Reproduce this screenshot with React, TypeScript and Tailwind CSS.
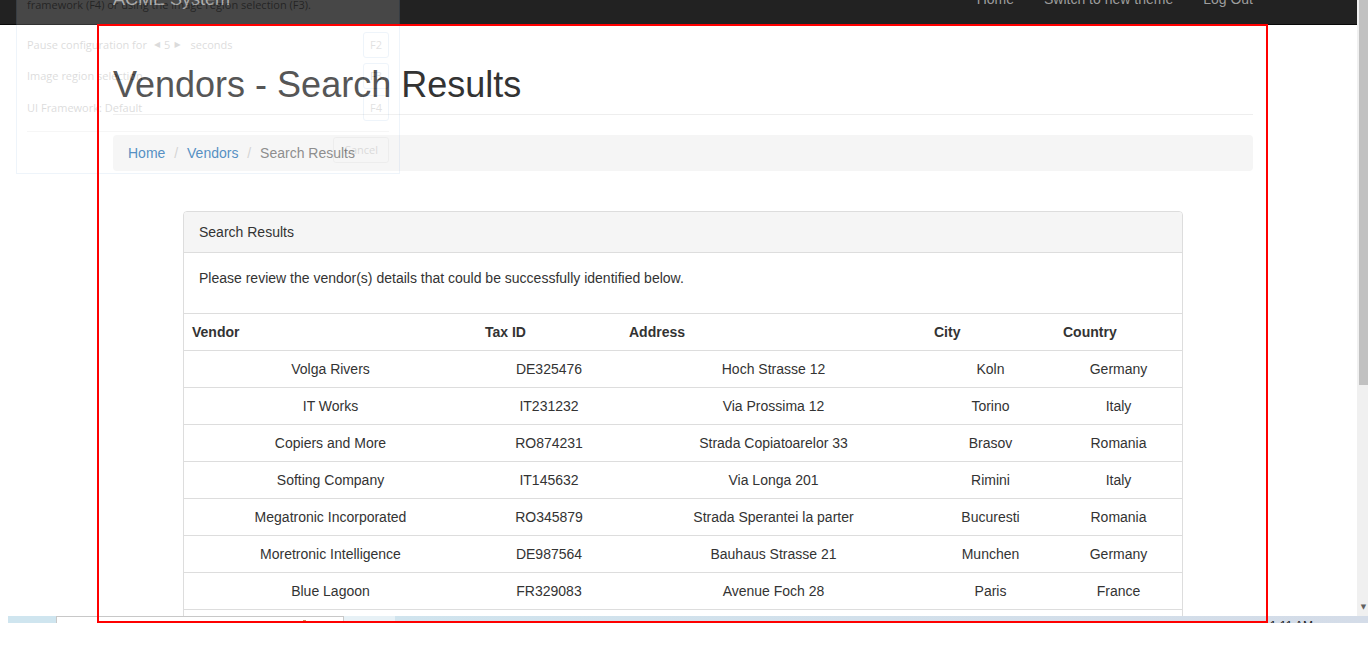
import React from 'react';

const vendors = [
  { name: 'Volga Rivers', taxId: 'DE325476', address: 'Hoch Strasse 12', city: 'Koln', country: 'Germany' },
  { name: 'IT Works', taxId: 'IT231232', address: 'Via Prossima 12', city: 'Torino', country: 'Italy' },
  { name: 'Copiers and More', taxId: 'RO874231', address: 'Strada Copiatoarelor 33', city: 'Brasov', country: 'Romania' },
  { name: 'Softing Company', taxId: 'IT145632', address: 'Via Longa 201', city: 'Rimini', country: 'Italy' },
  { name: 'Megatronic Incorporated', taxId: 'RO345879', address: 'Strada Sperantei la parter', city: 'Bucuresti', country: 'Romania' },
  { name: 'Moretronic Intelligence', taxId: 'DE987564', address: 'Bauhaus Strasse 21', city: 'Munchen', country: 'Germany' },
  { name: 'Blue Lagoon', taxId: 'FR329083', address: 'Avenue Foch 28', city: 'Paris', country: 'France' },
  { name: 'Nordic Supplies', taxId: 'SE112233', address: 'Storgatan 4', city: 'Malmo', country: 'Sweden' },
];

function Navbar() {
  return (
    <nav className="-mt-[26px] h-[51px] bg-[#222] border-b border-[#080808]">
      <div className="ml-[98px] w-[1170px] px-[15px] flex justify-between">
        <span className="py-[15px] text-[18px] leading-[20px] text-[#9d9d9d]">ACME System</span>
        <ul className="flex -mr-[15px]">
          {['Home', 'Switch to new theme', 'Log Out'].map((link) => (
            <li key={link}>
              <a className="block px-[15px] py-[15px] leading-[20px] text-[#9d9d9d]">{link}</a>
            </li>
          ))}
        </ul>
      </div>
    </nav>
  );
}

function Breadcrumb() {
  return (
    <ol className="h-[36px] px-[15px] py-[8px] leading-[20px] bg-[#f5f5f5] rounded-[4px]">
      <li className="inline-block">
        <a className="text-[#337ab7]">Home</a>
      </li>{' '}
      <li className="inline-block">
        <span className="px-[5px] text-[#ccc]">/&nbsp;</span>
        <a className="text-[#337ab7]">Vendors</a>
      </li>{' '}
      <li className="inline-block text-[#777]">
        <span className="px-[5px] text-[#ccc]">/&nbsp;</span>
        Search Results
      </li>
    </ol>
  );
}

function ResultsPanel() {
  return (
    <div className="ml-[70px] mt-[40px] w-[1000px] border border-[#ddd] rounded-[4px] bg-white">
      <div className="px-[15px] py-[10px] leading-[20px] bg-[#f5f5f5] border-b border-[#ddd] rounded-t-[3px]">
        Search Results
      </div>
      <div className="p-[15px]">
        <p className="leading-[20px] mb-[10px]">
          Please review the vendor(s) details that could be successfully identified below.
        </p>
      </div>
      <table className="w-full table-fixed border-collapse">
        <colgroup>
          <col className="w-[293px]" />
          <col className="w-[144px]" />
          <col className="w-[305px]" />
          <col className="w-[129px]" />
          <col className="w-[127px]" />
        </colgroup>
        <thead>
          <tr>
            {['Vendor', 'Tax ID', 'Address', 'City', 'Country'].map((h) => (
              <th key={h} className="border-t border-[#ddd] p-[8px] text-left font-bold leading-[20px]">
                {h}
              </th>
            ))}
          </tr>
        </thead>
        <tbody>
          {vendors.map((v) => (
            <tr key={v.taxId}>
              <td className="border-t border-[#ddd] p-[8px] text-center leading-[20px]">{v.name}</td>
              <td className="border-t border-[#ddd] p-[8px] text-center leading-[20px]">{v.taxId}</td>
              <td className="border-t border-[#ddd] p-[8px] text-center leading-[20px]">{v.address}</td>
              <td className="border-t border-[#ddd] p-[8px] text-center leading-[20px]">{v.city}</td>
              <td className="border-t border-[#ddd] p-[8px] text-center leading-[20px]">{v.country}</td>
            </tr>
          ))}
        </tbody>
      </table>
    </div>
  );
}

function KeyButton({ label }: { label: string }) {
  return (
    <span className="flex h-[26px] w-[26px] items-center justify-center rounded-[3px] border border-[#9fc0e4] text-[11px] text-[#555]">
      {label}
    </span>
  );
}

// faded recorder panel lying over the top-left corner
function ConfigOverlay() {
  return (
    <div className="absolute left-[16px] top-[-20px] w-[384px] h-[194px] bg-white border border-[#9fc0e4] opacity-[0.17] px-[10px] pt-[16px] font-['Open_Sans',sans-serif] text-[11px] text-[#333]">
      <div className="leading-[16px] h-[16px]">framework (F4) or using the image region selection (F3).</div>
      <div className="mt-[19px] flex h-[26px] items-center justify-between">
        <span className="flex items-center gap-[4px]">
          Pause configuration for
          <span className="ml-[3px] font-['DejaVu_Sans',sans-serif] text-[8px]">◀</span>
          <span>5</span>
          <span className="font-['DejaVu_Sans',sans-serif] text-[8px]">▶</span>
          <span className="ml-[6px]">seconds</span>
        </span>
        <KeyButton label="F2" />
      </div>
      <div className="mt-[5px] flex h-[26px] items-center justify-between">
        <span>Image region selection</span>
        <KeyButton label="F3" />
      </div>
      <div className="mt-[6px] flex h-[26px] items-center justify-between">
        <span>UI Framework: Default</span>
        <KeyButton label="F4" />
      </div>
      <div className="mt-[10px] border-t border-[#ccc]" />
      <div className="mt-[5px] flex justify-end">
        <span className="flex h-[26px] w-[56px] items-center justify-center rounded-[3px] border border-[#ccc] text-[#555]">
          Cancel
        </span>
      </div>
    </div>
  );
}

function Scrollbar() {
  return (
    <div className="w-[11px] bg-[#f0f0f0] flex flex-col">
      <div className="ml-[2px] h-[385px] bg-[#c1c1c1]" />
      <div className="flex-1" />
      <div className="h-[14px] flex justify-center pl-[2px] text-[7px] leading-[10px] text-[#606060] font-['DejaVu_Sans',sans-serif]">▼</div>
    </div>
  );
}

function TaskStrip() {
  return (
    <div className="flex h-[7px] overflow-hidden">
      <div className="w-[8px] bg-white" />
      <div className="w-[48px] bg-[#cfe5ef]" />
      <div className="w-[288px] bg-white border-t border-x border-[#c8c8c8] relative">
        <span className="absolute left-[246px] top-[3px] h-[4px] w-[3px] bg-[#c8935a]" />
      </div>
      <div className="w-[51px] bg-[#e7f1f6]" />
      <div className="flex-1 bg-gradient-to-r from-[#d0e4ee] to-[#d4dce8] flex justify-end pr-[55px]">
        <span className="pt-[3px] text-[12px] leading-[14px] text-[#222] font-['Liberation_Sans',sans-serif]">1:11 AM</span>
      </div>
    </div>
  );
}

export default function App() {
  return (
    <div className="relative w-[1368px] h-[649px] overflow-hidden bg-white font-['Liberation_Sans',Arial,sans-serif] text-[14px] text-[#333]">
      <div className="flex h-[616px]">
        <div className="w-[1357px] overflow-hidden">
          <Navbar />
          <div className="ml-[98px] w-[1170px] px-[15px]">
            <div className="mt-[40px] mb-[20px] pb-[9px] border-b border-[#eee]">
              <h1 className="text-[36px] leading-[1.1] font-normal">Vendors - Search Results</h1>
            </div>
            <Breadcrumb />
            <ResultsPanel />
          </div>
        </div>
        <Scrollbar />
      </div>
      <TaskStrip />

      <ConfigOverlay />
      {/* red selection frame */}
      <div className="absolute left-[97px] top-[24px] w-[1171px] h-[599px] border-2 border-[#ff0000]" />
    </div>
  );
}
